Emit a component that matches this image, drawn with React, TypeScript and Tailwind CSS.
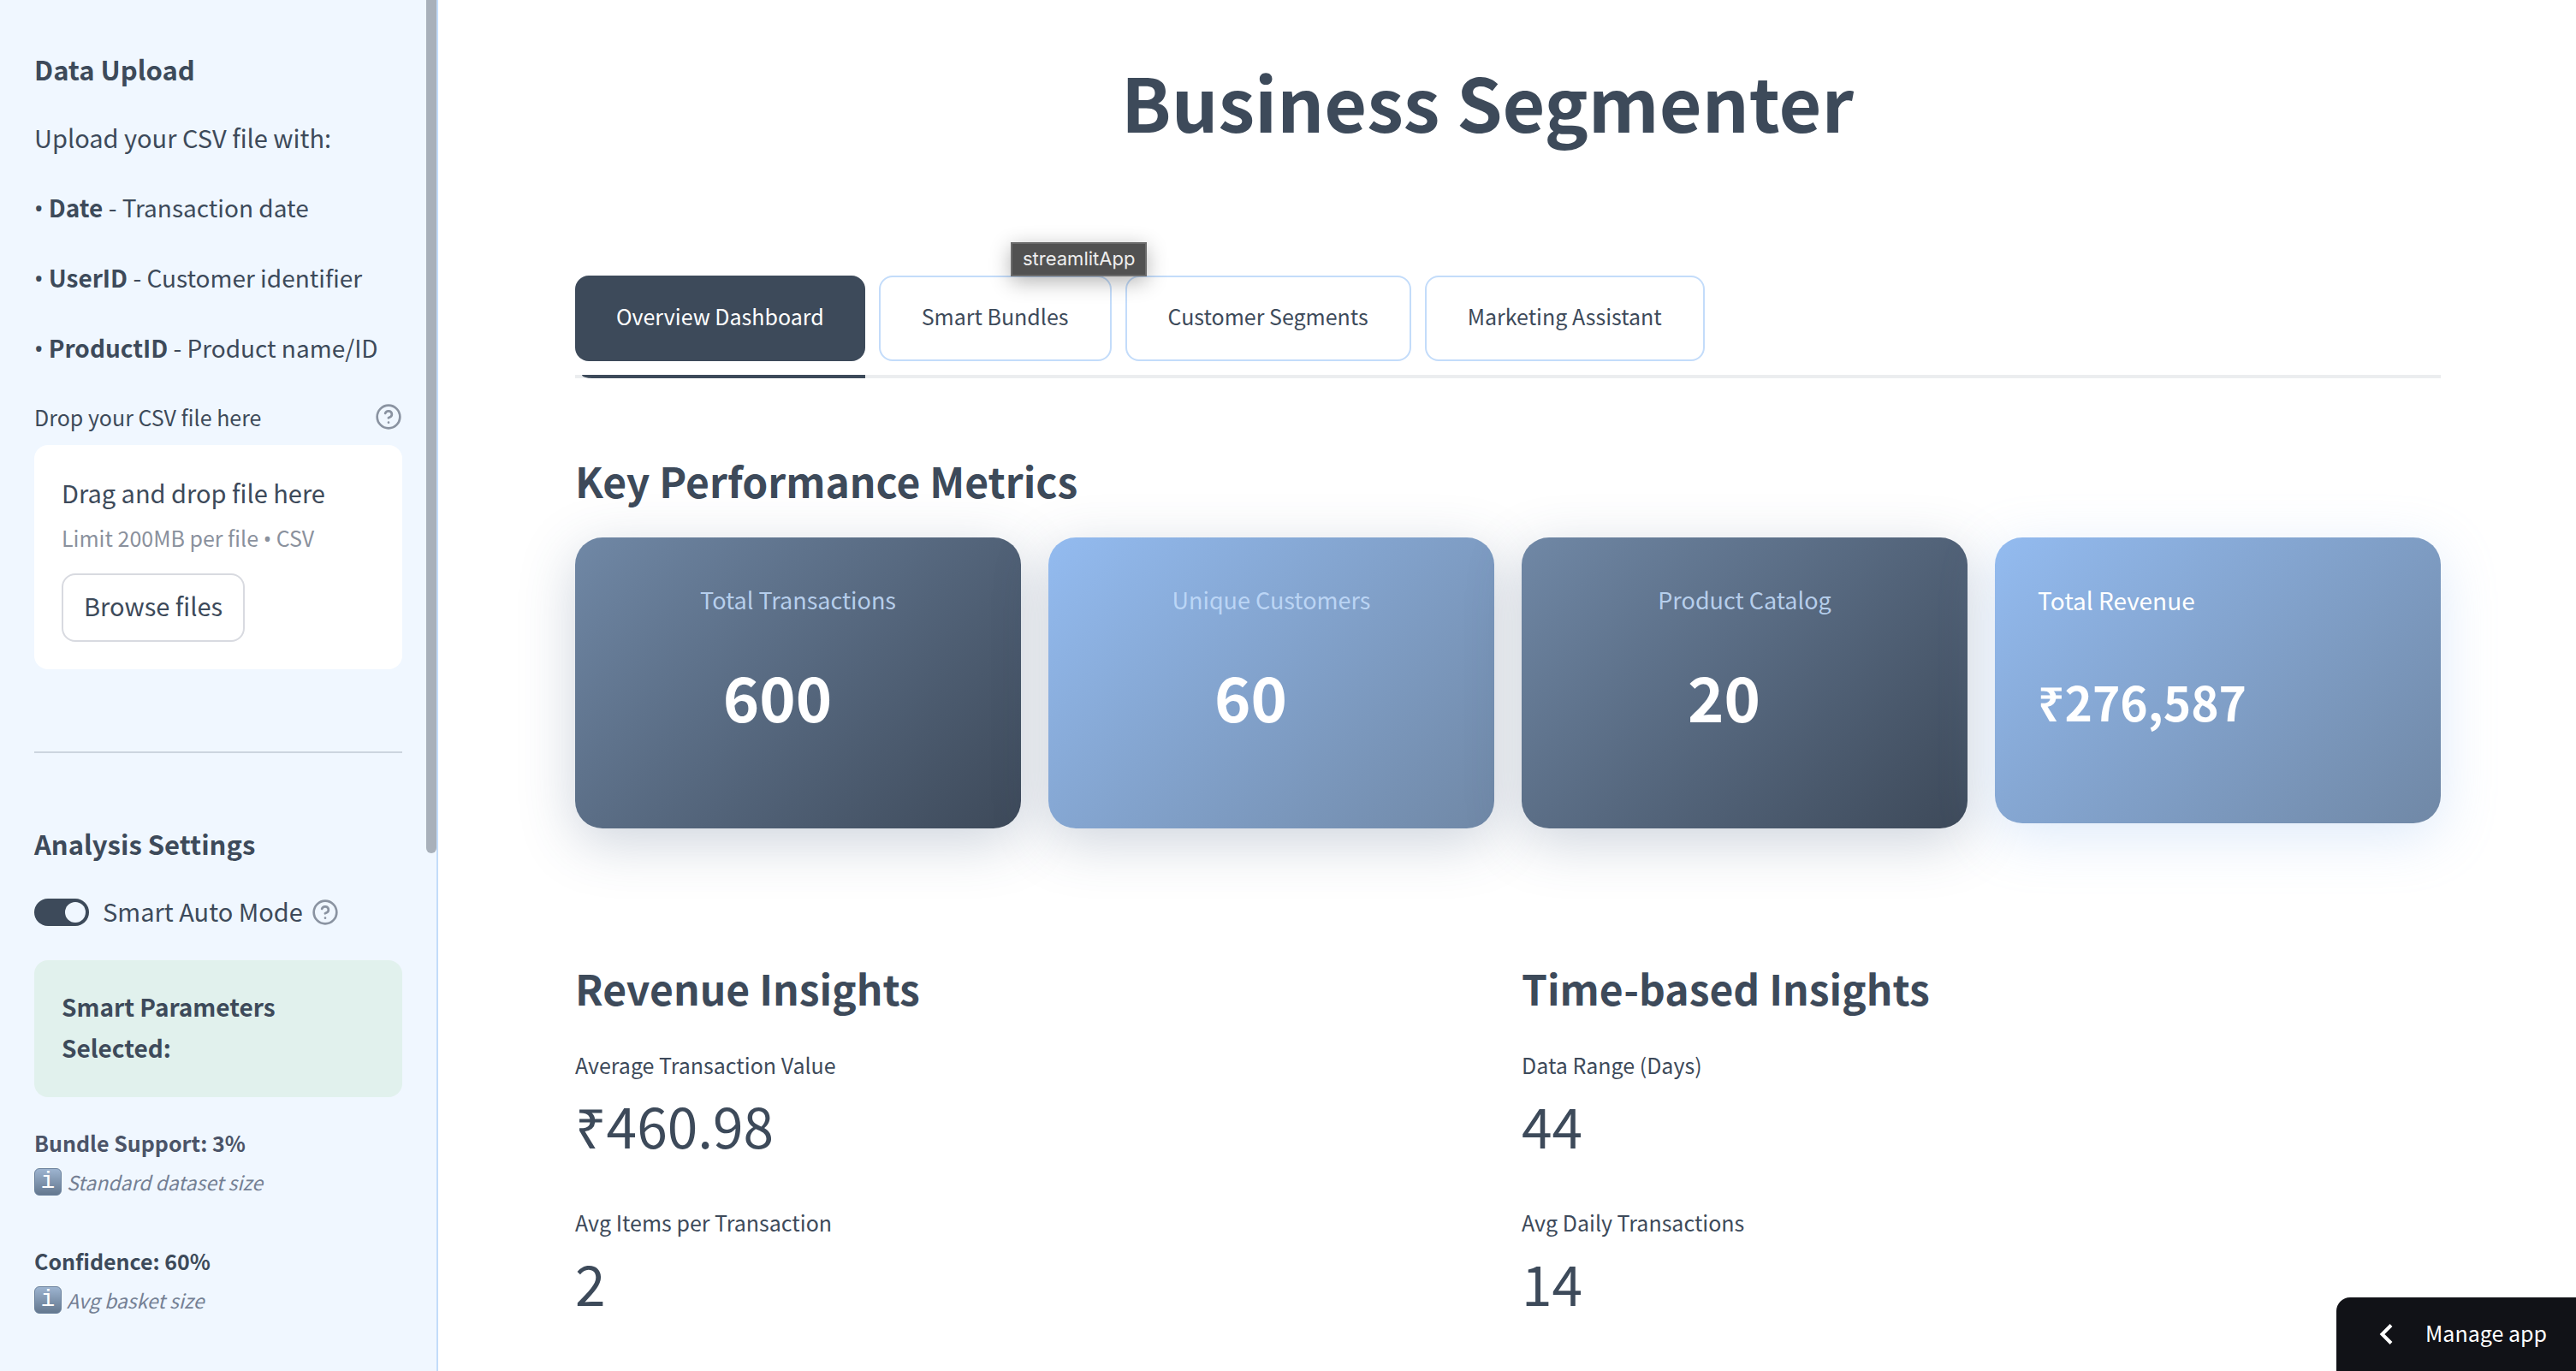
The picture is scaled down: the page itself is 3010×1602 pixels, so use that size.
import { useState } from "react";
import { CircleHelp } from "lucide-react";

const COLUMNS = [
  { name: "Date", text: "Transaction date" },
  { name: "UserID", text: "Customer identifier" },
  { name: "ProductID", text: "Product name/ID" },
];

const PARAMETERS = [
  { label: "Bundle Support: 3%", note: "Standard dataset size", color: "text-[#4b5468]" },
  { label: "Confidence: 60%", note: "Avg basket size", color: "text-[#3d4a5a]" },
];

const TABS = ["Overview Dashboard", "Smart Bundles", "Customer Segments", "Marketing Assistant"];

const KPIS = [
  { label: "Total Transactions", value: "600", bg: "from-[#7088a6] to-[#3d4959]" },
  { label: "Unique Customers", value: "60", bg: "from-[#93bbf0] to-[#7088a6]" },
  { label: "Product Catalog", value: "20", bg: "from-[#7088a6] to-[#3d4959]" },
];

const INSIGHTS = [
  {
    title: "Revenue Insights",
    metrics: [
      { label: "Average Transaction Value", value: "₹460.98" },
      { label: "Avg Items per Transaction", value: "2" },
    ],
  },
  {
    title: "Time-based Insights",
    metrics: [
      { label: "Data Range (Days)", value: "44" },
      { label: "Avg Daily Transactions", value: "14" },
    ],
  },
];

function HelpButton({ label }: { label: string }) {
  return (
    <button type="button" aria-label={label} className="shrink-0 text-[#8a93a1]">
      <CircleHelp className="size-8" strokeWidth={2} />
    </button>
  );
}

// The CJK face draws a full-width bullet, so take it from Noto Sans
function Bullet() {
  return <span className="font-['Noto_Sans'] leading-none">•</span>;
}

function InfoBadge() {
  return (
    <span className="flex h-8 w-8 shrink-0 items-center justify-center rounded-md border border-[#6b819c] bg-linear-to-b from-[#9db4d0] to-[#64788f] font-['Liberation_Mono'] text-[28px] leading-none text-white not-italic">
      i
    </span>
  );
}

function Sidebar() {
  const [auto, setAuto] = useState(true);

  return (
    <aside className="relative w-128 shrink-0 border-r-2 border-[#c3dcfa] bg-[#f0f7ff] pt-[59px] pr-10 pl-10">
      {/* Scroll thumb */}
      <div className="absolute top-0 right-0 h-[997px] w-3 rounded-b-full bg-[#a8b0ba]" />

      <h3 className="text-[31px] leading-[44px] font-semibold">Data Upload</h3>
      <p className="mt-8 text-[29px] leading-[50px]">Upload your CSV file with:</p>
      <div className="mt-8 space-y-8 text-[28px] leading-[50px]">
        {COLUMNS.map((c) => (
          <p key={c.name} className="whitespace-nowrap">
            <Bullet /> <strong className="font-semibold">{c.name}</strong> - {c.text}
          </p>
        ))}
      </div>

      <div className="mt-9 flex items-center justify-between">
        <label htmlFor="csv" className="text-[25px] leading-[40px]">
          Drop your CSV file here
        </label>
        <HelpButton label="File help" />
      </div>
      <div className="mt-[13px] rounded-2xl bg-white px-8 pt-[30px] pb-8">
        <p className="text-[29px] leading-[50px]">Drag and drop file here</p>
        <p className="mt-2 text-[25px] leading-[40px] text-[#8a919d]">
          Limit 200MB per file <Bullet /> CSV
        </p>
        <button
          id="csv"
          type="button"
          className="mt-[22px] h-20 rounded-2xl border-2 border-[#d8dae0] px-6 pb-1 text-[29px]"
        >
          Browse files
        </button>
      </div>

      <hr className="mt-24 border-t-2 border-[#ccd5df]" />

      <h3 className="mt-[84px] text-[31px] leading-[44px] font-semibold">Analysis Settings</h3>
      <div className="mt-[33px] flex items-center">
        <label className="flex items-center gap-4">
          <input
            type="checkbox"
            checked={auto}
            onChange={(e) => setAuto(e.target.checked)}
            className="peer sr-only"
          />
          <span className="flex h-8 w-16 items-center rounded-full bg-[#a8b0ba] p-1 peer-checked:justify-end peer-checked:bg-[#3d4a5a]">
            <span className="size-6 rounded-full bg-[#f0f7ff]" />
          </span>
          <span className="pb-1 text-[29px] leading-[46px]">Smart Auto Mode</span>
        </label>
        <span className="ml-2.5 flex">
          <HelpButton label="Auto mode help" />
        </span>
      </div>

      <div className="mt-[31px] rounded-2xl bg-[#e1f1ed] px-8 pt-[30px] pb-[34px] text-[28px] leading-[48px] font-semibold">
        Smart Parameters Selected:
      </div>

      <div className="mt-[30px] space-y-[46px] leading-[46px]">
        {PARAMETERS.map((p) => (
          <div key={p.label}>
            <p className={`text-[25px] font-semibold ${p.color}`}>{p.label}</p>
            <p className="flex items-center gap-1.5 text-[23px] text-[#748094] italic">
              <InfoBadge />
              {p.note}
            </p>
          </div>
        ))}
      </div>
    </aside>
  );
}

function Tabs() {
  const [active, setActive] = useState(TABS[0]);

  return (
    <div role="tablist" className="mt-[146px] flex gap-4 border-b-4 border-[#ebedef]">
      {TABS.map((tab) => (
        <div key={tab} className="relative pb-4">
          <button
            type="button"
            role="tab"
            aria-selected={tab === active}
            onClick={() => setActive(tab)}
            className={`h-[100px] rounded-2xl px-12 pb-1 text-[25px] ${
              tab === active ? "bg-[#3d4a5a] text-white" : "border-2 border-[#c3dcfa] bg-white"
            }`}
          >
            {tab}
          </button>
          {tab === active && (
            <div className="absolute right-0 -bottom-1 left-2 h-1 rounded-bl-[12px_4px] bg-[#3d4a5a]" />
          )}
        </div>
      ))}
    </div>
  );
}

export default function App() {
  return (
    <div className="flex min-h-screen bg-white font-['Noto_Sans_CJK_SC','Noto_Sans',sans-serif] text-[#3d4a5a]">
      <Sidebar />

      <main className="relative flex-1 pt-[60px] pr-[158px] pb-10 pl-40">
        <h1 className="pr-12 text-center text-[86px] leading-[116px] font-bold">Business Segmenter</h1>
        <Tabs />

        {/* Tooltip over the tabs */}
        <div
          role="tooltip"
          className="absolute top-[283px] left-[669px] flex h-10 items-center border-2 border-[#6b6b6b] bg-[#515151] px-3 pb-0.5 font-[Inter] text-[22px] text-[#eeeeee] shadow-[0_6px_24px_rgba(0,0,0,0.3)]"
        >
          streamlitApp
        </div>

        <h2 className="mt-[85px] text-[48px] leading-[68px] font-semibold">Key Performance Metrics</h2>
        <div className="mt-[33px] grid grid-cols-4 items-start gap-8">
          {KPIS.map((k) => (
            <div
              key={k.label}
              className={`rounded-[32px] bg-linear-135 px-12 pt-12 pb-[105px] text-center shadow-[0_16px_64px_rgba(61,84,120,0.25)] ${k.bg}`}
            >
              <p className="text-[27px] leading-[50px] text-[#c3dcfa]/90">{k.label}</p>
              <p className="mt-[37px] pr-12 text-[72px] leading-[100px] font-bold text-white">{k.value}</p>
            </div>
          ))}
          <div className="rounded-[32px] bg-linear-135 from-[#93bbf0] to-[#7088a6] px-[50px] pt-12 pb-[103px] text-white shadow-[0_16px_64px_rgba(147,187,240,0.3)]">
            <p className="text-[28px] leading-[50px]">Total Revenue</p>
            <p className="mt-[53px] text-[55px] leading-[80px] font-semibold">₹276,587</p>
          </div>
        </div>

        <div className="mt-[152px] grid grid-cols-2 gap-8">
          {INSIGHTS.map((section) => (
            <section key={section.title}>
              <h2 className="text-[48px] leading-[68px] font-semibold">{section.title}</h2>
              <dl className="mt-9 space-y-[49px]">
                {section.metrics.map((m) => (
                  <div key={m.label}>
                    <dt className="text-[25px] leading-[40px]">{m.label}</dt>
                    <dd className="mt-[5px] text-[64px] leading-[90px]">{m.value}</dd>
                  </div>
                ))}
              </dl>
            </section>
          ))}
        </div>
      </main>

      <button
        type="button"
        className="fixed right-0 bottom-0 flex h-[86px] items-center rounded-tl-2xl bg-[#111217] pr-[34px] pl-[50px] text-[25px] text-white"
      >
        <svg viewBox="0 0 16 24" className="mr-[38px] h-6 w-4" fill="none" stroke="currentColor" strokeWidth="4">
          <path d="M14 1.5 3.5 12 14 22.5" />
        </svg>
        <span className="pb-0.5">Manage app</span>
      </button>
    </div>
  );
}
